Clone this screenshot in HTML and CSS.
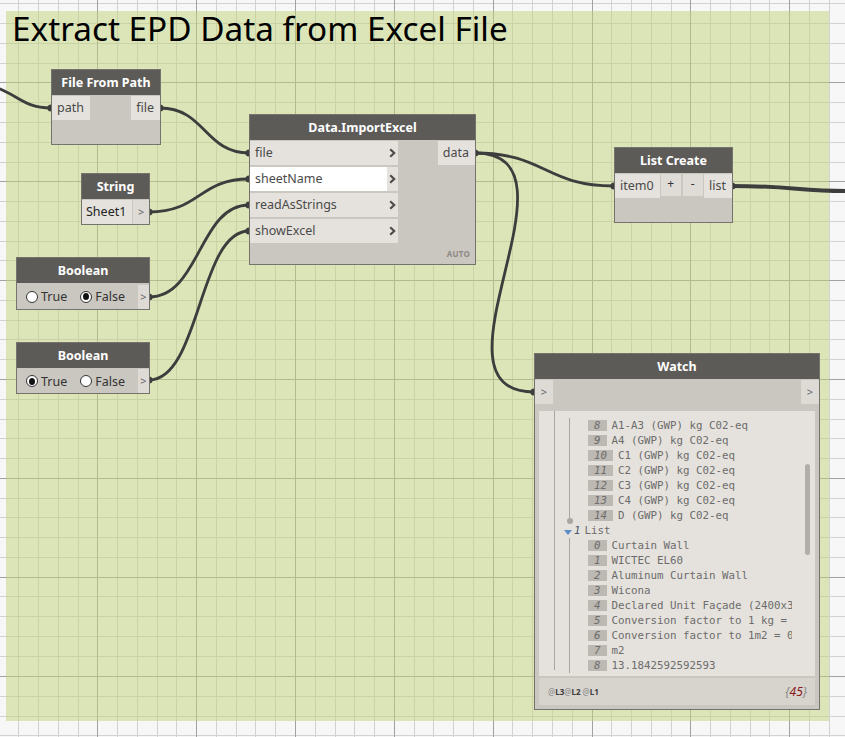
FILE: index.html
```html
<!DOCTYPE html>
<html lang="en">
<head>
<meta charset="utf-8">
<title>Extract EPD Data from Excel File</title>
<link rel="stylesheet" href="styles.css">
</head>
<body>
<div class="canvas">
  <svg class="grid" width="845" height="737" viewBox="0 0 845 737">
    <path class="minor" d="M18.5 0V737M38.5 0V737M58.5 0V737M78.5 0V737M117.5 0V737M137.5 0V737M157.5 0V737M176.5 0V737M216.5 0V737M236.5 0V737M255.5 0V737M275.5 0V737M315.5 0V737M335.5 0V737M354.5 0V737M374.5 0V737M414.5 0V737M433.5 0V737M453.5 0V737M473.5 0V737M512.5 0V737M532.5 0V737M552.5 0V737M572.5 0V737M611.5 0V737M631.5 0V737M651.5 0V737M671.5 0V737M710.5 0V737M730.5 0V737M750.5 0V737M769.5 0V737M809.5 0V737M829.5 0V737M0 3.5H845M0 23.5H845M0 43.5H845M0 63.5H845M0 102.5H845M0 122.5H845M0 142.5H845M0 162.5H845M0 201.5H845M0 221.5H845M0 241.5H845M0 260.5H845M0 300.5H845M0 320.5H845M0 339.5H845M0 359.5H845M0 399.5H845M0 419.5H845M0 438.5H845M0 458.5H845M0 498.5H845M0 517.5H845M0 537.5H845M0 557.5H845M0 596.5H845M0 616.5H845M0 636.5H845M0 656.5H845M0 696.5H845M0 716.5H845M0 735.5H845"/>
    <path class="major" d="M97.5 0V737M196.5 0V737M295.5 0V737M394.5 0V737M493.5 0V737M592.5 0V737M690.5 0V737M789.5 0V737M0 82.5H845M0 181.5H845M0 280.5H845M0 379.5H845M0 478.5H845M0 577.5H845M0 676.5H845"/>
  </svg>

  <div class="group">
    <div class="group-title">Extract EPD Data from Excel File</div>
  </div>

  <svg class="wires" width="845" height="737" viewBox="0 0 845 737">
    <g class="wire">
      <path d="M-30 84C15 84 15 108 51 108"/>
      <path d="M160 108C205 108 205 153 249 153"/>
      <path d="M149 212C200 212 199 179 249 179"/>
      <path d="M149 297C200 297 199 205 249 205"/>
      <path d="M149 380C200 380 199 231 249 231"/>
      <path d="M475 153C545 153 545 186 614 186"/>
      <path d="M475 153C592 153 418 392 534 392"/>
      <path class="thick" d="M732 186C790 186 800 191 845 191"/>
    </g>
    <g class="pin">
      <circle cx="51" cy="108" r="3.6"/>
      <circle cx="160" cy="108" r="3.6"/>
      <circle cx="249" cy="153" r="3.6"/>
      <circle cx="249" cy="179" r="3.6"/>
      <circle cx="249" cy="205" r="3.6"/>
      <circle cx="249" cy="231" r="3.6"/>
      <circle cx="149" cy="212" r="3.6"/>
      <circle cx="149" cy="297" r="3.6"/>
      <circle cx="149" cy="380" r="3.6"/>
      <circle cx="475" cy="153" r="3.6"/>
      <circle cx="614" cy="186" r="3.6"/>
      <circle cx="732" cy="186" r="3.6"/>
      <circle cx="534" cy="392" r="3.6"/>
    </g>
  </svg>

  <!-- File From Path -->
  <div class="node n-ffp">
    <div class="node-head">File From Path</div>
    <div class="node-body">
      <div class="port">path</div>
      <div class="port">file</div>
    </div>
  </div>

  <!-- String -->
  <div class="node n-str">
    <div class="node-head">String</div>
    <div class="node-body tight">
      <div class="port value">Sheet1</div>
      <div class="port out-arrow">&gt;</div>
    </div>
  </div>

  <!-- Data.ImportExcel -->
  <div class="node n-imp">
    <div class="node-head">Data.ImportExcel</div>
    <div class="node-body">
      <div class="inputs">
        <div class="in-row"><div class="in-label">file</div><div class="in-chev"><svg width="7" height="10" viewBox="0 0 7 10"><path d="M1.2 1.2L5.2 5L1.2 8.8"/></svg></div></div>
        <div class="in-row"><div class="in-label active">sheetName</div><div class="in-chev"><svg width="7" height="10" viewBox="0 0 7 10"><path d="M1.2 1.2L5.2 5L1.2 8.8"/></svg></div></div>
        <div class="in-row"><div class="in-label">readAsStrings</div><div class="in-chev"><svg width="7" height="10" viewBox="0 0 7 10"><path d="M1.2 1.2L5.2 5L1.2 8.8"/></svg></div></div>
        <div class="in-row"><div class="in-label">showExcel</div><div class="in-chev"><svg width="7" height="10" viewBox="0 0 7 10"><path d="M1.2 1.2L5.2 5L1.2 8.8"/></svg></div></div>
      </div>
      <div class="port">data</div>
    </div>
    <div class="node-foot">AUTO</div>
  </div>

  <!-- List Create -->
  <div class="node n-lc">
    <div class="node-head">List Create</div>
    <div class="node-body">
      <div class="port">item0</div>
      <div class="pm">
        <div class="port small">+</div>
        <div class="port small">-</div>
      </div>
      <div class="port">list</div>
    </div>
  </div>

  <!-- Boolean 1 -->
  <div class="node n-b1">
    <div class="node-head">Boolean</div>
    <div class="node-body bool">
      <span class="radio"></span><span class="rlabel">True</span>
      <span class="radio on"></span><span class="rlabel">False</span>
      <div class="port out-arrow">&gt;</div>
    </div>
  </div>

  <!-- Boolean 2 -->
  <div class="node n-b2">
    <div class="node-head">Boolean</div>
    <div class="node-body bool">
      <span class="radio on"></span><span class="rlabel">True</span>
      <span class="radio"></span><span class="rlabel">False</span>
      <div class="port out-arrow">&gt;</div>
    </div>
  </div>

  <!-- Watch -->
  <div class="node n-watch">
    <div class="node-head">Watch</div>
    <div class="node-body">
      <div class="port out-arrow">&gt;</div>
      <div class="port out-arrow">&gt;</div>
    </div>
    <div class="watch-view">
      <div class="tree">
        <div class="lvl1">
          <div class="lvl2 ended">
            <div class="row"><span class="idx">8</span><span class="val">A1-A3 (GWP) kg C02-eq</span></div>
            <div class="row"><span class="idx">9</span><span class="val">A4 (GWP) kg C02-eq</span></div>
            <div class="row"><span class="idx">10</span><span class="val">C1 (GWP) kg C02-eq</span></div>
            <div class="row"><span class="idx">11</span><span class="val">C2 (GWP) kg C02-eq</span></div>
            <div class="row"><span class="idx">12</span><span class="val">C3 (GWP) kg C02-eq</span></div>
            <div class="row"><span class="idx">13</span><span class="val">C4 (GWP) kg C02-eq</span></div>
            <div class="row"><span class="idx">14</span><span class="val">D (GWP) kg C02-eq</span></div>
          </div>
          <div class="sub-head"><span class="tri"><svg width="8" height="5" viewBox="0 0 8 5"><path d="M0 0H8L4 5Z"/></svg></span><span class="lnum">1</span><span class="ltxt">List</span></div>
          <div class="lvl2">
            <div class="row"><span class="idx">0</span><span class="val">Curtain Wall</span></div>
            <div class="row"><span class="idx">1</span><span class="val">WICTEC EL60</span></div>
            <div class="row"><span class="idx">2</span><span class="val">Aluminum Curtain Wall</span></div>
            <div class="row"><span class="idx">3</span><span class="val">Wicona</span></div>
            <div class="row"><span class="idx">4</span><span class="val">Declared Unit Façade (2400x3</span></div>
            <div class="row"><span class="idx">5</span><span class="val">Conversion factor to 1 kg =</span></div>
            <div class="row"><span class="idx">6</span><span class="val">Conversion factor to 1m2 = 0</span></div>
            <div class="row"><span class="idx">7</span><span class="val">m2</span></div>
            <div class="row"><span class="idx">8</span><span class="val">13.1842592592593</span></div>
          </div>
        </div>
      </div>
      <div class="scroll"><div class="thumb"></div></div>
    </div>
    <div class="watch-foot">
      <div class="levels"><span class="at">@</span>L3<span class="at">@</span>L2 <span class="at">@</span>L1</div>
      <div class="count">{<span class="num">45</span>}</div>
    </div>
  </div>
</div>
</body>
</html>
```
FILE: styles.css
```css
* { box-sizing: border-box; }

body {
  margin: 0;
  font-family: "Noto Sans", "Open Sans", sans-serif;
  background: #f7f7f7;
}

.canvas {
  position: relative;
  width: 845px;
  height: 737px;
  overflow: hidden;
  background: #f7f7f7;
}

.grid, .wires {
  position: absolute;
  left: 0;
  top: 0;
}

.grid .minor { stroke: #d2d2d2; stroke-width: 1; fill: none; }
.grid .major { stroke: #a2a2a2; stroke-width: 1; fill: none; }

.group {
  position: absolute;
  left: 6px;
  top: 11px;
  width: 823px;
  height: 710px;
  background: rgba(192, 212, 122, 0.5);
}

.group-title {
  font-size: 33.3px;
  line-height: 35px;
  color: #000;
  padding-left: 6px;
  white-space: nowrap;
}

.wire path { fill: none; stroke: #3d3d3d; stroke-width: 2.8; }
.wire path.thick { stroke-width: 4; }
.pin circle { fill: #3d3d3d; }

/* nodes */
.node {
  position: absolute;
  border: 1px solid #76726d;
  background: #cac6c0;
  display: flex;
  flex-direction: column;
}

.node-head {
  height: 25px;
  flex: none;
  background: #5d5b58;
  color: #fff;
  font-weight: 700;
  font-size: 12.5px;
  display: flex;
  align-items: center;
  justify-content: center;
  white-space: nowrap;
}

.node-body {
  display: flex;
  justify-content: space-between;
  align-items: flex-start;
  padding-top: 1px;
}

.node-body.tight { gap: 1px; }

.port {
  height: 24px;
  line-height: 24px;
  padding: 0 6px 0 5px;
  background: #e5e2dd;
  color: #4a4a4a;
  font-size: 12.5px;
  white-space: nowrap;
}

.port.value { flex: 1; color: #222; padding-left: 4px; }

.port.out-arrow {
  width: 18px;
  padding: 0;
  text-align: center;
  background: #dedbd6;
  color: #666;
  font-size: 11px;
}

.n-ffp { left: 51px; top: 69px; width: 110px; height: 76px; }
.n-str { left: 81px; top: 173px; width: 69px; height: 52px; }
.n-imp { left: 249px; top: 114px; width: 227px; height: 151px; }
.n-lc { left: 614px; top: 147px; width: 119px; height: 76px; }
.n-b1 { left: 16px; top: 257px; width: 134px; height: 53px; }
.n-b2 { left: 16px; top: 342px; width: 134px; height: 52px; }
.n-watch { left: 534px; top: 353px; width: 286px; height: 357px; }

/* import excel */
.inputs { width: 148px; display: flex; flex-direction: column; gap: 2px; }
.in-row { display: flex; height: 24px; }
.in-label {
  flex: 1;
  background: #e5e2dd;
  color: #4a4a4a;
  font-size: 12.5px;
  line-height: 24px;
  padding-left: 5px;
}
.in-label.active { background: #fff; }
.in-chev {
  width: 11px;
  background: #e5e2dd;
  display: flex;
  align-items: center;
  justify-content: center;
}
.in-chev path { fill: none; stroke: #4e4c4a; stroke-width: 2.2; }

.node-foot {
  margin-top: auto;
  text-align: right;
  padding: 0 5px 5px 0;
  font-size: 8px;
  font-weight: 700;
  color: #8e8a84;
  letter-spacing: 0.2px;
}

/* list create */
.pm { display: flex; gap: 2px; margin-right: auto; margin-left: 1px; }
.port.small {
  width: 20px;
  height: 22px;
  line-height: 20px;
  padding: 0;
  text-align: center;
  background: #dfdcd7;
  color: #333;
  font-size: 12px;
}

/* boolean */
.node-body.bool {
  align-items: center;
  justify-content: flex-start;
  padding-left: 9px;
  height: 26px;
}
.radio {
  width: 12px;
  height: 12px;
  border-radius: 50%;
  border: 1px solid #333;
  background: #fff;
  display: flex;
  align-items: center;
  justify-content: center;
  flex: none;
}
.radio.on::after {
  content: "";
  width: 6px;
  height: 7px;
  border-radius: 50%;
  background: #111;
}
.rlabel {
  font-size: 12.5px;
  color: #333;
  margin: 0 13px 0 3px;
}
.bool .out-arrow { margin-left: auto; }

/* watch */
.watch-view {
  margin: 7px 4px 0 4px;
  height: 265px;
  background: #e5e2dd;
  display: flex;
  overflow: hidden;
}
.tree {
  width: 253px;
  flex: none;
  overflow: hidden;
  padding-left: 15px;
}
.lvl1 {
  border-left: 1px solid #a9a6a1;
  padding-left: 14px;
  padding-top: 7px;
  height: 259px;
}
.lvl2 {
  border-left: 1px solid #a9a6a1;
  padding-left: 18px;
  position: relative;
}
.lvl2.ended::after {
  content: "";
  position: absolute;
  left: -3.5px;
  bottom: -1px;
  width: 6px;
  height: 6px;
  border-radius: 50%;
  background: #a9a6a1;
}
.row {
  display: flex;
  align-items: center;
  height: 15px;
  white-space: nowrap;
  font-family: "DejaVu Sans Mono", "Liberation Mono", monospace;
  font-size: 10.8px;
}
.idx {
  background: #bcb8b2;
  color: #6d6d6d;
  font-style: italic;
  padding: 0 6px;
  height: 11px;
  line-height: 11px;
  margin-right: 5px;
}
.val { color: #6c6c6c; }

.sub-head {
  display: flex;
  align-items: center;
  height: 15px;
  margin-left: -8px;
  font-family: "DejaVu Sans Mono", "Liberation Mono", monospace;
  font-size: 10.8px;
  white-space: nowrap;
}
.tri { width: 13px; display: flex; justify-content: center; padding-top: 3px; }
.tri path { fill: #5b8cc8; }
.lnum { color: #4c5a6e; font-style: italic; }
.ltxt { color: #6c6c6c; margin-left: 4px; }

.scroll { flex: 1; padding: 53px 0 0 13px; }
.thumb { width: 5px; height: 91px; border-radius: 3px; background: #b1aea9; }

.watch-foot {
  margin: 2px 4px 0 4px;
  height: 27px;
  background: #d7d4ce;
  display: flex;
  align-items: center;
  justify-content: space-between;
  padding: 0 8px 0 9px;
}
.levels { font-size: 8px; font-weight: 700; color: #3c3c3c; }
.levels .at { color: #8a8a8a; font-weight: 400; }
.count { font-size: 12px; font-style: italic; color: #8a8a8a; }
.count .num { color: #8b1a1a; }
```
